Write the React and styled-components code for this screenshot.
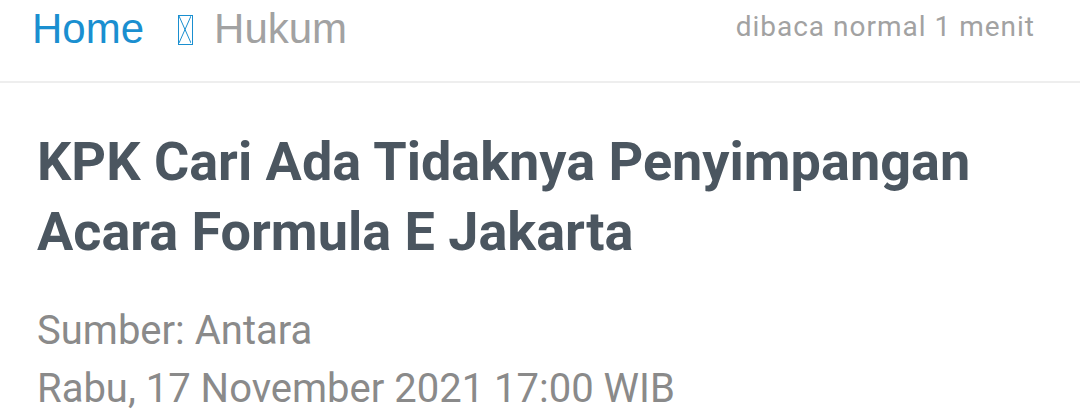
import React from "react";
import styled, { createGlobalStyle } from "styled-components";

const Global = createGlobalStyle`
  html, body { margin: 0; padding: 0; background: #fff; }
  body { width: 1080px; height: 411px; overflow: hidden; }
`;

const Page = styled.div`
  width: 1080px;
  display: flex;
  flex-direction: column;
`;

const TopBar = styled.div`
  display: flex;
  align-items: flex-start;
  justify-content: space-between;
  padding: 0 45px 0 32px;
  border-bottom: 2px solid #eeeeee;
  box-sizing: border-box;
  height: 83px;
`;

const Crumbs = styled.div`
  display: flex;
  align-items: center;
  font-family: "Liberation Sans", Arial, sans-serif;
  font-size: 42px;
  line-height: 1;
  padding-top: 8px;
`;

const Crumb = styled.span`
  color: ${(p) => (p.$active ? "#1a8fd0" : "#a2a2a2")};
`;

const Tofu = styled.span`
  display: inline-block;
  width: 15px;
  height: 30px;
  margin: 2px 21px 0 34px;
  border: 1.5px solid #1a8fd0;
  box-sizing: border-box;
  position: relative;
`;

const TofuCross = styled.svg`
  position: absolute;
  left: 0;
  top: 0;
`;

const ReadTime = styled.span`
  font-family: Roboto, sans-serif;
  font-size: 28px;
  letter-spacing: 1px;
  color: #a2a2a2;
  line-height: 1;
  padding-top: 13px;
`;

const Article = styled.div`
  padding: 44px 37px 0 37px;
  display: flex;
  flex-direction: column;
`;

const Title = styled.h1`
  margin: 0;
  font-family: Roboto, sans-serif;
  font-weight: 700;
  font-size: 54px;
  line-height: 70px;
  color: #4b5660;
`;

const Meta = styled.div`
  margin-top: 35px;
  font-family: Roboto, sans-serif;
  font-size: 40px;
  line-height: 58px;
  color: #8a8a8a;
`;

export default function App() {
  return (
    <Page>
      <Global />
      <TopBar>
        <Crumbs>
          <Crumb $active>Home</Crumb>
          <Tofu>
            <TofuCross width="12" height="27" viewBox="0 0 12 27">
              <path d="M0 0 L12 27 M12 0 L0 27" stroke="#1a8fd0" strokeWidth="1" fill="none" />
            </TofuCross>
          </Tofu>
          <Crumb>Hukum</Crumb>
        </Crumbs>
        <ReadTime>dibaca normal 1 menit</ReadTime>
      </TopBar>
      <Article>
        <Title>
          KPK Cari Ada Tidaknya Penyimpangan
          <br />
          Acara Formula E Jakarta
        </Title>
        <Meta>
          Sumber: Antara
          <br />
          Rabu, 17 November 2021 17:00 WIB
        </Meta>
      </Article>
    </Page>
  );
}
